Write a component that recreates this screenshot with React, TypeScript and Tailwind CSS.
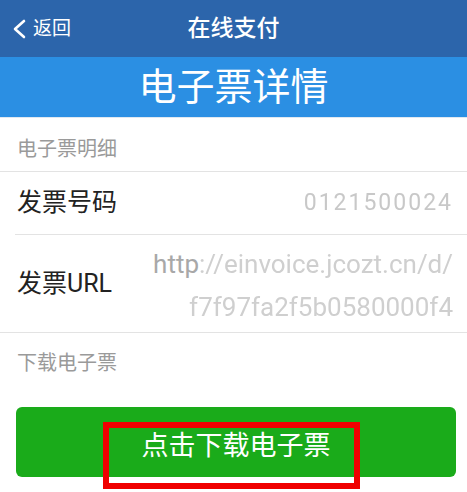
import React from "react";

const font = { fontFamily: "Roboto, 'Noto Sans CJK SC', sans-serif" };

export default function App() {
  return (
    <div style={font} className="w-[467px] h-[492px] overflow-hidden bg-white flex flex-col relative">
      {/* Nav bar */}
      <div className="h-[57px] bg-[#2c65ab] grid grid-cols-[1fr_auto_1fr] items-center text-white">
        <div className="flex items-center pl-[12px] gap-[7px]">
          <svg width="14" height="20" viewBox="0 0 14 20" fill="none">
            <polyline points="12,2 3,10 12,18" stroke="white" strokeWidth="2.6" strokeLinecap="round" strokeLinejoin="round" />
          </svg>
          <span className="text-[19px] leading-none">返回</span>
        </div>
        <div className="text-[23px] font-medium leading-none">在线支付</div>
        <div />
      </div>

      {/* Title band */}
      <div className="h-[60px] bg-[#2b8fe3] flex items-center justify-center text-white text-[38px] leading-none">
        电子票详情
      </div>
      <div className="h-[1px] bg-[#dfe8f1]" />

      {/* Section header */}
      <div className="h-[54px] flex items-center px-[17px] pt-[8px] text-[20px] text-[#9a9a9a] border-b border-[#e3e3e3]">
        电子票明细
      </div>

      {/* Invoice number */}
      <div className="ml-[15px] h-[63px] flex items-center justify-between pl-[2px] pr-[14px] border-b border-[#e3e3e3]">
        <span className="text-[25px] text-[#222]">发票号码</span>
        <span className="text-[23px] text-[#c8c8c8] blur-[0.6px] tracking-[2px]">0121500024</span>
      </div>

      {/* Invoice URL */}
      <div className="h-[98px] flex items-center justify-between pl-[17px] pr-[14px] border-b border-[#e3e3e3]">
        <span className="text-[25px] text-[#222]">发票URL</span>
        <div className="flex flex-col items-end text-[26px] leading-[43px] text-[#a8a8a8] pt-[4px]">
          <span>http<span className="text-[#cfcfcf] blur-[0.6px]">://einvoice.jcozt.cn/d/</span></span>
          <span className="text-[#cfcfcf] blur-[0.6px]">f7f97fa2f5b0580000f4</span>
        </div>
      </div>

      {/* Download section */}
      <div className="h-[74px] flex items-center px-[17px] text-[20px] text-[#9a9a9a] pb-[14px]">
        下载电子票
      </div>

      <div className="px-[16px] pr-[11px]">
        <button className="w-full h-[70px] rounded-[6px] bg-[#1aab1a] text-white text-[27px] flex items-center justify-center pt-[8px]">
          点击下载电子票
        </button>
      </div>

      {/* Red annotation frame */}
      <div className="absolute left-[103px] top-[422px] w-[257px] h-[67px] border-[6px] border-[#f00000]" />
    </div>
  );
}
